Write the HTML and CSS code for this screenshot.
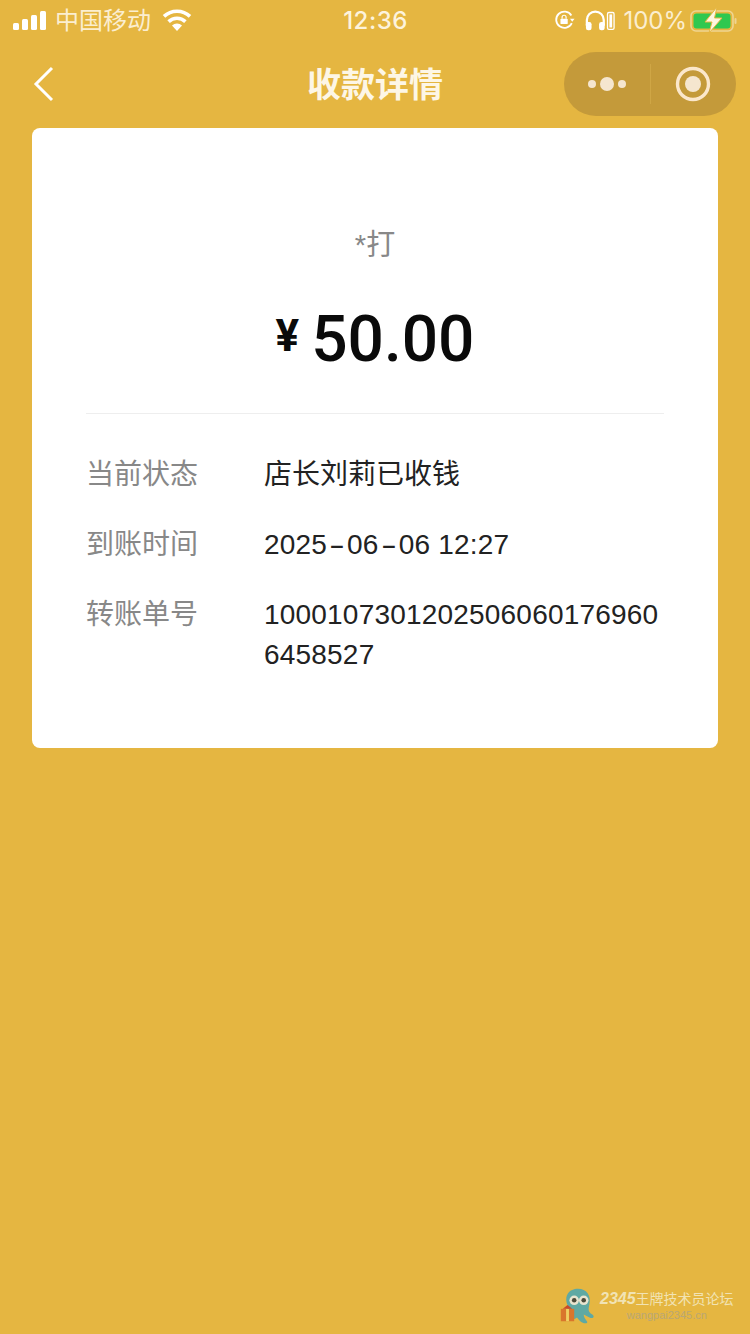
FILE: index.html
```html
<!DOCTYPE html>
<html lang="zh-CN">
<head>
    <meta charset="UTF-8">
    <meta name="viewport" content="width=device-width, initial-scale=1.0">
    <title>收款详情</title>
    <link rel="stylesheet" href="styles.css">
</head>
<body>
<div class="page">
    <div class="status-bar">
        <div class="status-left">
            <svg class="signal" width="34" height="19" viewBox="0 0 34 19"><rect x="0" y="12" width="6" height="7" rx="1.5"/><rect x="9" y="8" width="6" height="11" rx="1.5"/><rect x="18" y="4" width="6" height="15" rx="1.5"/><rect x="27" y="0" width="6" height="19" rx="1.5"/></svg>
            <span class="carrier">中国移动</span>
            <svg class="wifi" width="30" height="22" viewBox="0 0 30 22"><path d="M15 22l-5-5.6a7.2 7.2 0 0 1 10 0z" fill="#fff"/><path d="M6.6 12.6a12.2 12.2 0 0 1 16.8 0" fill="none" stroke="#fff" stroke-width="3.6"/><path d="M2 7.4a18.8 18.8 0 0 1 26 0" fill="none" stroke="#fff" stroke-width="3.6"/></svg>
        </div>
        <div class="status-time">12:36</div>
        <div class="status-right">
            <svg class="lock" width="22" height="20" viewBox="0 0 24 22"><path d="M19.5 14.5A9 9 0 1 1 19 6" fill="none" stroke="#fff" stroke-width="2"/><path d="M17.5 9.5h5l-2.5 3.4z" fill="#fff"/><rect x="7" y="9.5" width="8" height="6" rx="1" fill="#fff"/><path d="M8.8 9.5V8a2.2 2.2 0 0 1 4.4 0v1.5" fill="none" stroke="#fff" stroke-width="1.3"/></svg>
            <svg class="headphones" width="30" height="22" viewBox="0 0 32 22"><path d="M2 17v-6a9 9 0 0 1 18 0v6" fill="none" stroke="#fff" stroke-width="2.4"/><rect x="1" y="13" width="6" height="9" rx="2.5" fill="#fff"/><rect x="15" y="13" width="6" height="9" rx="2.5" fill="#fff"/><rect x="24" y="3" width="7" height="18" rx="1.5" fill="none" stroke="#fff" stroke-width="1.4"/><rect x="26" y="5" width="3" height="14" fill="#fff"/></svg>
            <span class="battery-pct">100%</span>
            <svg class="battery" width="48" height="26" viewBox="0 0 48 26"><rect x="1" y="4" width="42" height="20" rx="5" fill="none" stroke="#efd591" stroke-width="1.6"/><rect x="3.5" y="6.5" width="37" height="15" rx="3" fill="#2fc84f"/><rect x="44.5" y="11" width="2" height="6" rx="1" fill="#efd591"/><path d="M27 0L15 15h7l-3 11 13-15h-7.5z" fill="#fdf6e0" stroke="#e5b641"/></svg>
        </div>
    </div>

    <div class="nav-bar">
        <svg class="nav-back" width="24" height="36" viewBox="0 0 24 36"><path d="M20 2L4 18l16 16" fill="none" stroke="#fff" stroke-width="3"/></svg>
        <h1 class="nav-title">收款详情</h1>
        <div class="capsule">
            <div class="capsule-btn">
                <svg width="38" height="16" viewBox="0 0 38 16"><circle cx="4" cy="8" r="4" fill="#f5e6cf"/><circle cx="19" cy="8" r="7" fill="#f5e6cf"/><circle cx="34" cy="8" r="4" fill="#f5e6cf"/></svg>
            </div>
            <div class="capsule-line"></div>
            <div class="capsule-btn">
                <svg width="36" height="36" viewBox="0 0 36 36"><circle cx="18" cy="18" r="15.5" fill="none" stroke="#fbe7cb" stroke-width="3.4"/><circle cx="18" cy="18" r="8" fill="#f5e6cf"/></svg>
            </div>
        </div>
    </div>

    <div class="card">
        <div class="payer">*打</div>
        <div class="amount"><span class="amount-sign">¥</span>50.00</div>
        <div class="card-line"></div>
        <div class="row">
            <div class="row-label">当前状态</div>
            <div class="row-value">店长刘莉已收钱</div>
        </div>
        <div class="row">
            <div class="row-label">到账时间</div>
            <div class="row-value row-num">2025<span class="dash">-</span>06<span class="dash">-</span>06 12:27</div>
        </div>
        <div class="row">
            <div class="row-label">转账单号</div>
            <div class="row-value row-num">10001073012025060601769606458527</div>
        </div>
    </div>

    <div class="watermark">
        <svg width="40" height="40" viewBox="0 0 42 42">
            <path d="M10 20C6 10 12 3 21 3s14 7 12 16c-1 5-2 8 3 11 3 2 1 5-3 3l-6-3c0 5 6 8 3 9-4 1-8-3-10-6-3 2-9 4-10 1z" fill="#5fa9a3"/>
            <circle cx="17" cy="15" r="5" fill="#e8e4cf"/><circle cx="27" cy="15" r="5" fill="#e8e4cf"/>
            <circle cx="17" cy="15" r="2.4" fill="#4a4a3a"/><circle cx="27" cy="15" r="2.4" fill="#4a4a3a"/>
            <rect x="3" y="24" width="14" height="13" fill="#d9762c"/><rect x="8.5" y="24" width="3" height="13" fill="#f0d060"/><path d="M5 24l5-4 5 4z" fill="#c94a2a"/>
        </svg>
        <div class="watermark-text">
            <div class="watermark-title"><b>2345</b>王牌技术员论坛</div>
            <div class="watermark-url">wangpai2345.cn</div>
        </div>
    </div>
</div>
</body>
</html>
```

FILE: styles.css
```css
* {
    box-sizing: border-box;
}
html, body {
    margin: 0;
    padding: 0;
}
body {
    font-family: "Liberation Sans", "Noto Sans CJK SC", sans-serif;
}
.page {
    position: relative;
    width: 750px;
    height: 1334px;
    overflow: hidden;
    background: #e5b641;
}

/* status bar */
.status-bar {
    display: grid;
    grid-template-columns: 1fr auto 1fr;
    align-items: center;
    height: 42px;
    padding: 0 12px 2px 13px;
    color: #fff;
    font-size: 24px;
}
.status-left, .status-right {
    display: flex;
    align-items: center;
}
.status-right {
    justify-content: flex-end;
}
.signal {
    fill: #fff;
    margin-right: 8px;
}
.carrier {
    margin-bottom: 3px;
    color: #fbeed0;
}
.wifi {
    margin-left: 11px;
}
.status-time {
    font-family: Inter, sans-serif;
    font-size: 24px;
    font-weight: 500;
    letter-spacing: 0.5px;
    color: #fdf3dc;
}
.lock {
    margin-right: 1px;
}
.headphones {
    margin-left: 8px;
}
.battery-pct {
    margin-left: 8px;
    font-family: Inter, sans-serif;
    font-size: 24px;
    color: #fbeed0;
}
.battery {
    margin-left: 3px;
}

/* nav */
.nav-bar {
    position: relative;
    display: flex;
    align-items: center;
    justify-content: space-between;
    height: 86px;
    padding: 0 14px 2px 32px;
}
.nav-title {
    margin: 0;
    font-size: 34px;
    font-weight: 700;
    color: #fdf6e6;
    position: absolute;
    left: 0;
    right: 0;
    top: 16px;
    text-align: center;
}
.capsule {
    display: flex;
    align-items: center;
    width: 172px;
    height: 64px;
    border-radius: 32px;
    background: #c49a3a;
}
.capsule-btn {
    flex: 1;
    display: flex;
    align-items: center;
    justify-content: center;
}
.capsule-line {
    width: 1px;
    height: 40px;
    background: #cfa645;
}

/* card */
.card {
    margin: 0 32px;
    height: 620px;
    padding: 97px 54px 0;
    background: #fff;
    border-radius: 8px;
}
.payer {
    height: 40px;
    line-height: 40px;
    text-align: center;
    font-size: 29px;
    color: #888;
}
.amount {
    margin-top: 35px;
    height: 72px;
    line-height: 72px;
    text-align: center;
    font-family: Roboto, sans-serif;
    font-size: 64px;
    font-weight: 500;
    color: #0a0a0a;
}
.amount-sign {
    font-size: 44px;
    font-weight: 700;
    margin-right: 12px;
    vertical-align: 10px;
}
.card-line {
    height: 1px;
    margin-top: 41px;
    background: #eee;
}
.row {
    display: flex;
    margin-top: 30px;
    font-size: 28px;
    line-height: 40px;
}
.card-line + .row {
    margin-top: 41px;
}
.row-label {
    flex: none;
    width: 178px;
    color: #888;
}
.row-value {
    flex: 1;
    color: #222;
    word-break: break-all;
}
.row-num {
    letter-spacing: 0.2px;
}
.dash {
    display: inline-block;
    width: 20px;
    line-height: 1;
    text-align: center;
    transform: scaleX(1.7);
}

/* watermark over the page corner */
.watermark {
    position: absolute;
    left: 558px;
    bottom: 8px;
    display: flex;
    align-items: center;
}
.watermark-text {
    margin-left: 2px;
    text-align: center;
}
.watermark-title {
    font-size: 14px;
    line-height: 16px;
    color: #f1e3b4;
    white-space: nowrap;
}
.watermark-title b {
    font-size: 16px;
    font-style: italic;
}
.watermark-url {
    margin-top: 2px;
    font-size: 11px;
    line-height: 12px;
    color: #b9a775;
}
```
